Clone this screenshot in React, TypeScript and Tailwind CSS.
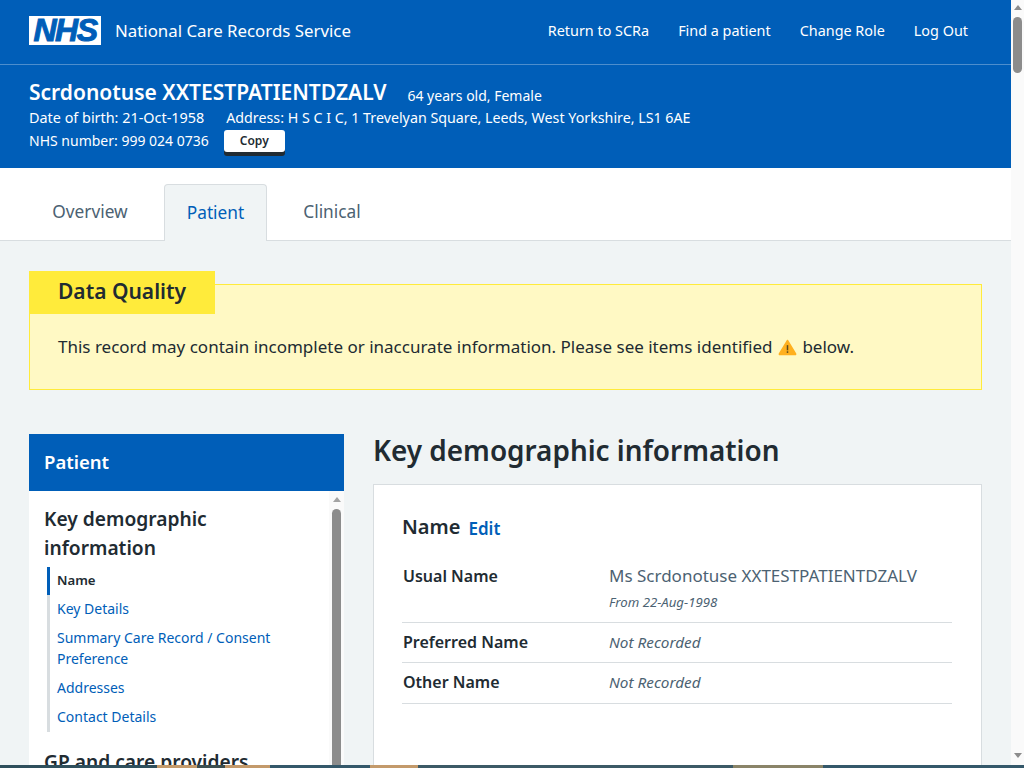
const NAV = ["Return to SCRa", "Find a patient", "Change Role", "Log Out"];

const SUB_LINKS = [
  "Key Details",
  "Summary Care Record / Consent Preference",
  "Addresses",
  "Contact Details",
];

function WarningIcon() {
  return (
    <svg viewBox="0 0 20 18" className="inline-block w-[19px] h-[17px] align-[-3px] mx-[1px]">
      <path
        d="M10 1.5 L18.5 15.5 Q19 16.5 18 16.5 L2 16.5 Q1 16.5 1.5 15.5 Z"
        fill="#ffb01f"
        stroke="#ffb01f"
        strokeWidth="1.5"
        strokeLinejoin="round"
      />
      <rect x="9.2" y="6.5" width="1.6" height="5.5" fill="#5a4a1e" />
      <rect x="9.2" y="13" width="1.6" height="1.7" fill="#5a4a1e" />
    </svg>
  );
}

function DetailRow({ label, children, pad }: { label: string; children: React.ReactNode; pad: string }) {
  return (
    <div className={`flex border-b border-[#d8dde0] leading-[24px] ${pad}`}>
      <div className="w-[207px] pl-px text-[16px] font-semibold text-[#212b32]">{label}</div>
      <div className="flex-1">{children}</div>
    </div>
  );
}

export default function App() {
  return (
    <div className="h-[768px] w-[1024px] overflow-hidden flex flex-col font-['Noto_Sans','Open_Sans',sans-serif] bg-[#f0f4f5]">
      <div className="flex-1 min-h-0 flex">
        <div className="w-[1011px] shrink-0 flex flex-col overflow-hidden">
          {/* Top bar */}
          <header className="shrink-0 bg-[#005eb8] text-white">
            <div className="h-[65px] flex items-center pb-[3px] pl-[29px] pr-[43px] border-b border-[#4d8ecd]">
              <div className="w-[72px] h-[29px] bg-white flex items-center justify-center">
                <span className="font-['Liberation_Sans',sans-serif] font-bold italic text-[32px] leading-[29px] tracking-[-1.5px] text-[#005eb8] [-webkit-text-stroke:1px_#005eb8]">NHS</span>
              </div>
              <span className="ml-[14px] text-[16.85px]">National Care Records Service</span>
              <nav className="ml-auto flex gap-[29px] text-[14.4px]">
                {NAV.map((n) => (
                  <a key={n}>{n}</a>
                ))}
              </nav>
            </div>

            {/* Patient banner */}
            <div className="h-[103px] pl-[29px] pt-[13px] text-[14px]">
              <div className="flex items-start leading-[28px]">
                <span className="font-semibold text-[21px]">Scrdonotuse XXTESTPATIENTDZALV</span>
                <span className="ml-[21px] mt-[4px]">64 years old, Female</span>
              </div>
              <div className="flex gap-[22px] leading-[22px] -mt-[3px]">
                <span className="text-[14.4px]">Date of birth: 21-Oct-1958</span>
                <span className="text-[14.25px]">Address: H S C I C, 1 Trevelyan Square, Leeds, West Yorkshire, LS1 6AE</span>
              </div>
              <div className="flex items-center h-[23px]">
                <span>NHS number: 999 024 0736</span>
                <button className="ml-[15px] w-[61px] h-[22px] bg-white text-[#212b32] text-[12px] font-semibold rounded-[3px] shadow-[0_4px_0_#212b32]">Copy</button>
              </div>
            </div>
          </header>

          {/* Tabs */}
          <div className="shrink-0 h-[73px] bg-white border-b border-[#d8dde0] flex items-end pl-[29px] text-[17.3px] text-[#4c6272]">
            <div className="w-[122px] mr-[13px] h-[56px] pb-px flex items-center justify-center">Overview</div>
            <div className="w-[103px] h-[57px] -mb-px pb-px bg-[#f0f4f5] border border-b-0 border-[#d8dde0] rounded-t-[4px] flex items-center justify-center text-[#005eb8]">Patient</div>
            <div className="w-[130px] h-[56px] pb-px flex items-center justify-center">Clinical</div>
          </div>

          {/* Page body */}
          <div className="pl-[29px] pr-[29px]">
            <section className="relative mt-[43px] h-[106px] bg-[#fff9c4] border border-[#ffeb3b]">
              <h2 className="absolute -left-px -top-[14px] w-[186px] h-[43px] pb-[2px] bg-[#ffeb3b] pl-[29px] flex items-center text-[21px] font-semibold text-[#212b32]">Data Quality</h2>
              <p className="pl-[28px] pt-[49px] text-[17px] leading-[26px] text-[#212b32]">
                This record may contain incomplete or inaccurate information. Please see items identified <WarningIcon /> below.
              </p>
            </section>

            <div className="mt-[44px] flex gap-[29px]">
              {/* Side nav */}
              <aside className="w-[315px] shrink-0">
                <div className="h-[57px] pb-[2px] bg-[#005eb8] text-white font-semibold text-[18.5px] flex items-center pl-[15px]">Patient</div>
                <div className="bg-white flex h-[300px]">
                  <div className="flex-1 pl-[15px] pt-[13px]">
                    <h3 className="text-[19.2px] font-semibold leading-[29px] text-[#212b32] w-[220px]">Key demographic information</h3>
                    <ul className="mt-[5px] ml-[3px] text-[14px] border-l-[3px] border-[#d8dde0] text-[#005eb8]">
                      <li className="-ml-[3px] border-l-[3px] border-[#005eb8] pl-[7px] h-[28px] flex items-center font-semibold text-[#212b32] text-[13.2px]">Name</li>
                      {SUB_LINKS.map((l) => (
                        <li key={l} className="pl-[7px] pt-[3px] pb-[5px] leading-[21px] w-[240px]">{l}</li>
                      ))}
                    </ul>
                    <h3 className="mt-[15px] text-[19.2px] font-semibold leading-[29px] text-[#212b32]">GP and care providers</h3>
                  </div>
                  <div className="w-[15px] shrink-0 bg-[#fafafa] flex flex-col items-center pt-[6px]">
                    <span className="w-0 h-0 border-x-[4px] border-x-transparent border-b-[5px] border-b-[#a3a3a3]" />
                    <span className="mt-[7px] w-[9px] flex-1 rounded-t-full bg-[#8c8c8c]" />
                  </div>
                </div>
              </aside>

              {/* Main content */}
              <main className="flex-1 min-w-0">
                <h1 className="-mt-px text-[27.9px] font-semibold leading-[34px] text-[#212b32]">Key demographic information</h1>
                <div className="mt-[17px] h-[300px] bg-white border border-[#d8dde0] pl-[28px] pr-[29px]">
                  <div className="pt-[26px] flex items-start">
                    <h3 className="text-[20px] font-semibold text-[#212b32] leading-[32px]">Name</h3>
                    <a className="ml-[8px] mt-[2px] text-[17px] leading-[32px] font-semibold text-[#005eb8]">Edit</a>
                  </div>
                  <div className="mt-[19px]">
                    <DetailRow label="Usual Name" pad="pb-[11px]">
                      <div className="text-[17px] text-[#4c6272]">Ms Scrdonotuse XXTESTPATIENTDZALV</div>
                      <div className="italic text-[13.2px] leading-[18px] mt-[5px] text-[#4c6272]">From 22-Aug-1998</div>
                    </DetailRow>
                    <DetailRow label="Preferred Name" pad="pt-[7px] pb-[8px]">
                      <div className="italic text-[15.3px] text-[#4c6272]">Not Recorded</div>
                    </DetailRow>
                    <DetailRow label="Other Name" pad="pt-[7px] pb-[9px]">
                      <div className="italic text-[15.3px] text-[#4c6272]">Not Recorded</div>
                    </DetailRow>
                  </div>
                </div>
              </main>
            </div>
          </div>
        </div>

        {/* Window scrollbar */}
        <div className="w-[13px] shrink-0 bg-[#fafafa] flex flex-col items-center pt-[5px]">
          <span className="w-0 h-0 border-x-[4px] border-x-transparent border-b-[5px] border-b-[#8c8c8c]" />
          <span className="mt-[7px] w-[9px] h-[56px] rounded-full bg-[#8c8c8c]" />
          <span className="mt-auto mb-[7px] w-0 h-0 border-x-[4px] border-x-transparent border-t-[5px] border-t-[#8c8c8c]" />
        </div>
      </div>

      {/* Top edge of the picture in the next section, just in view at the fold */}
      <div className="shrink-0 h-[3px] flex bg-[#34586a]">
        <div className="w-[157px] bg-[#2f4f5c]" />
        <div className="w-[40px] bg-[#c39a6b]" />
        <div className="w-[28px] bg-[#3c4f50]" />
        <div className="w-[45px] bg-[#c39a6b]" />
        <div className="w-[100px] bg-[#34586a]" />
        <div className="w-[48px] bg-[#c39a6b]" />
        <div className="w-[315px] bg-[#3c5a66]" />
        <div className="w-[90px] bg-[#8a8468]" />
      </div>
    </div>
  );
}
